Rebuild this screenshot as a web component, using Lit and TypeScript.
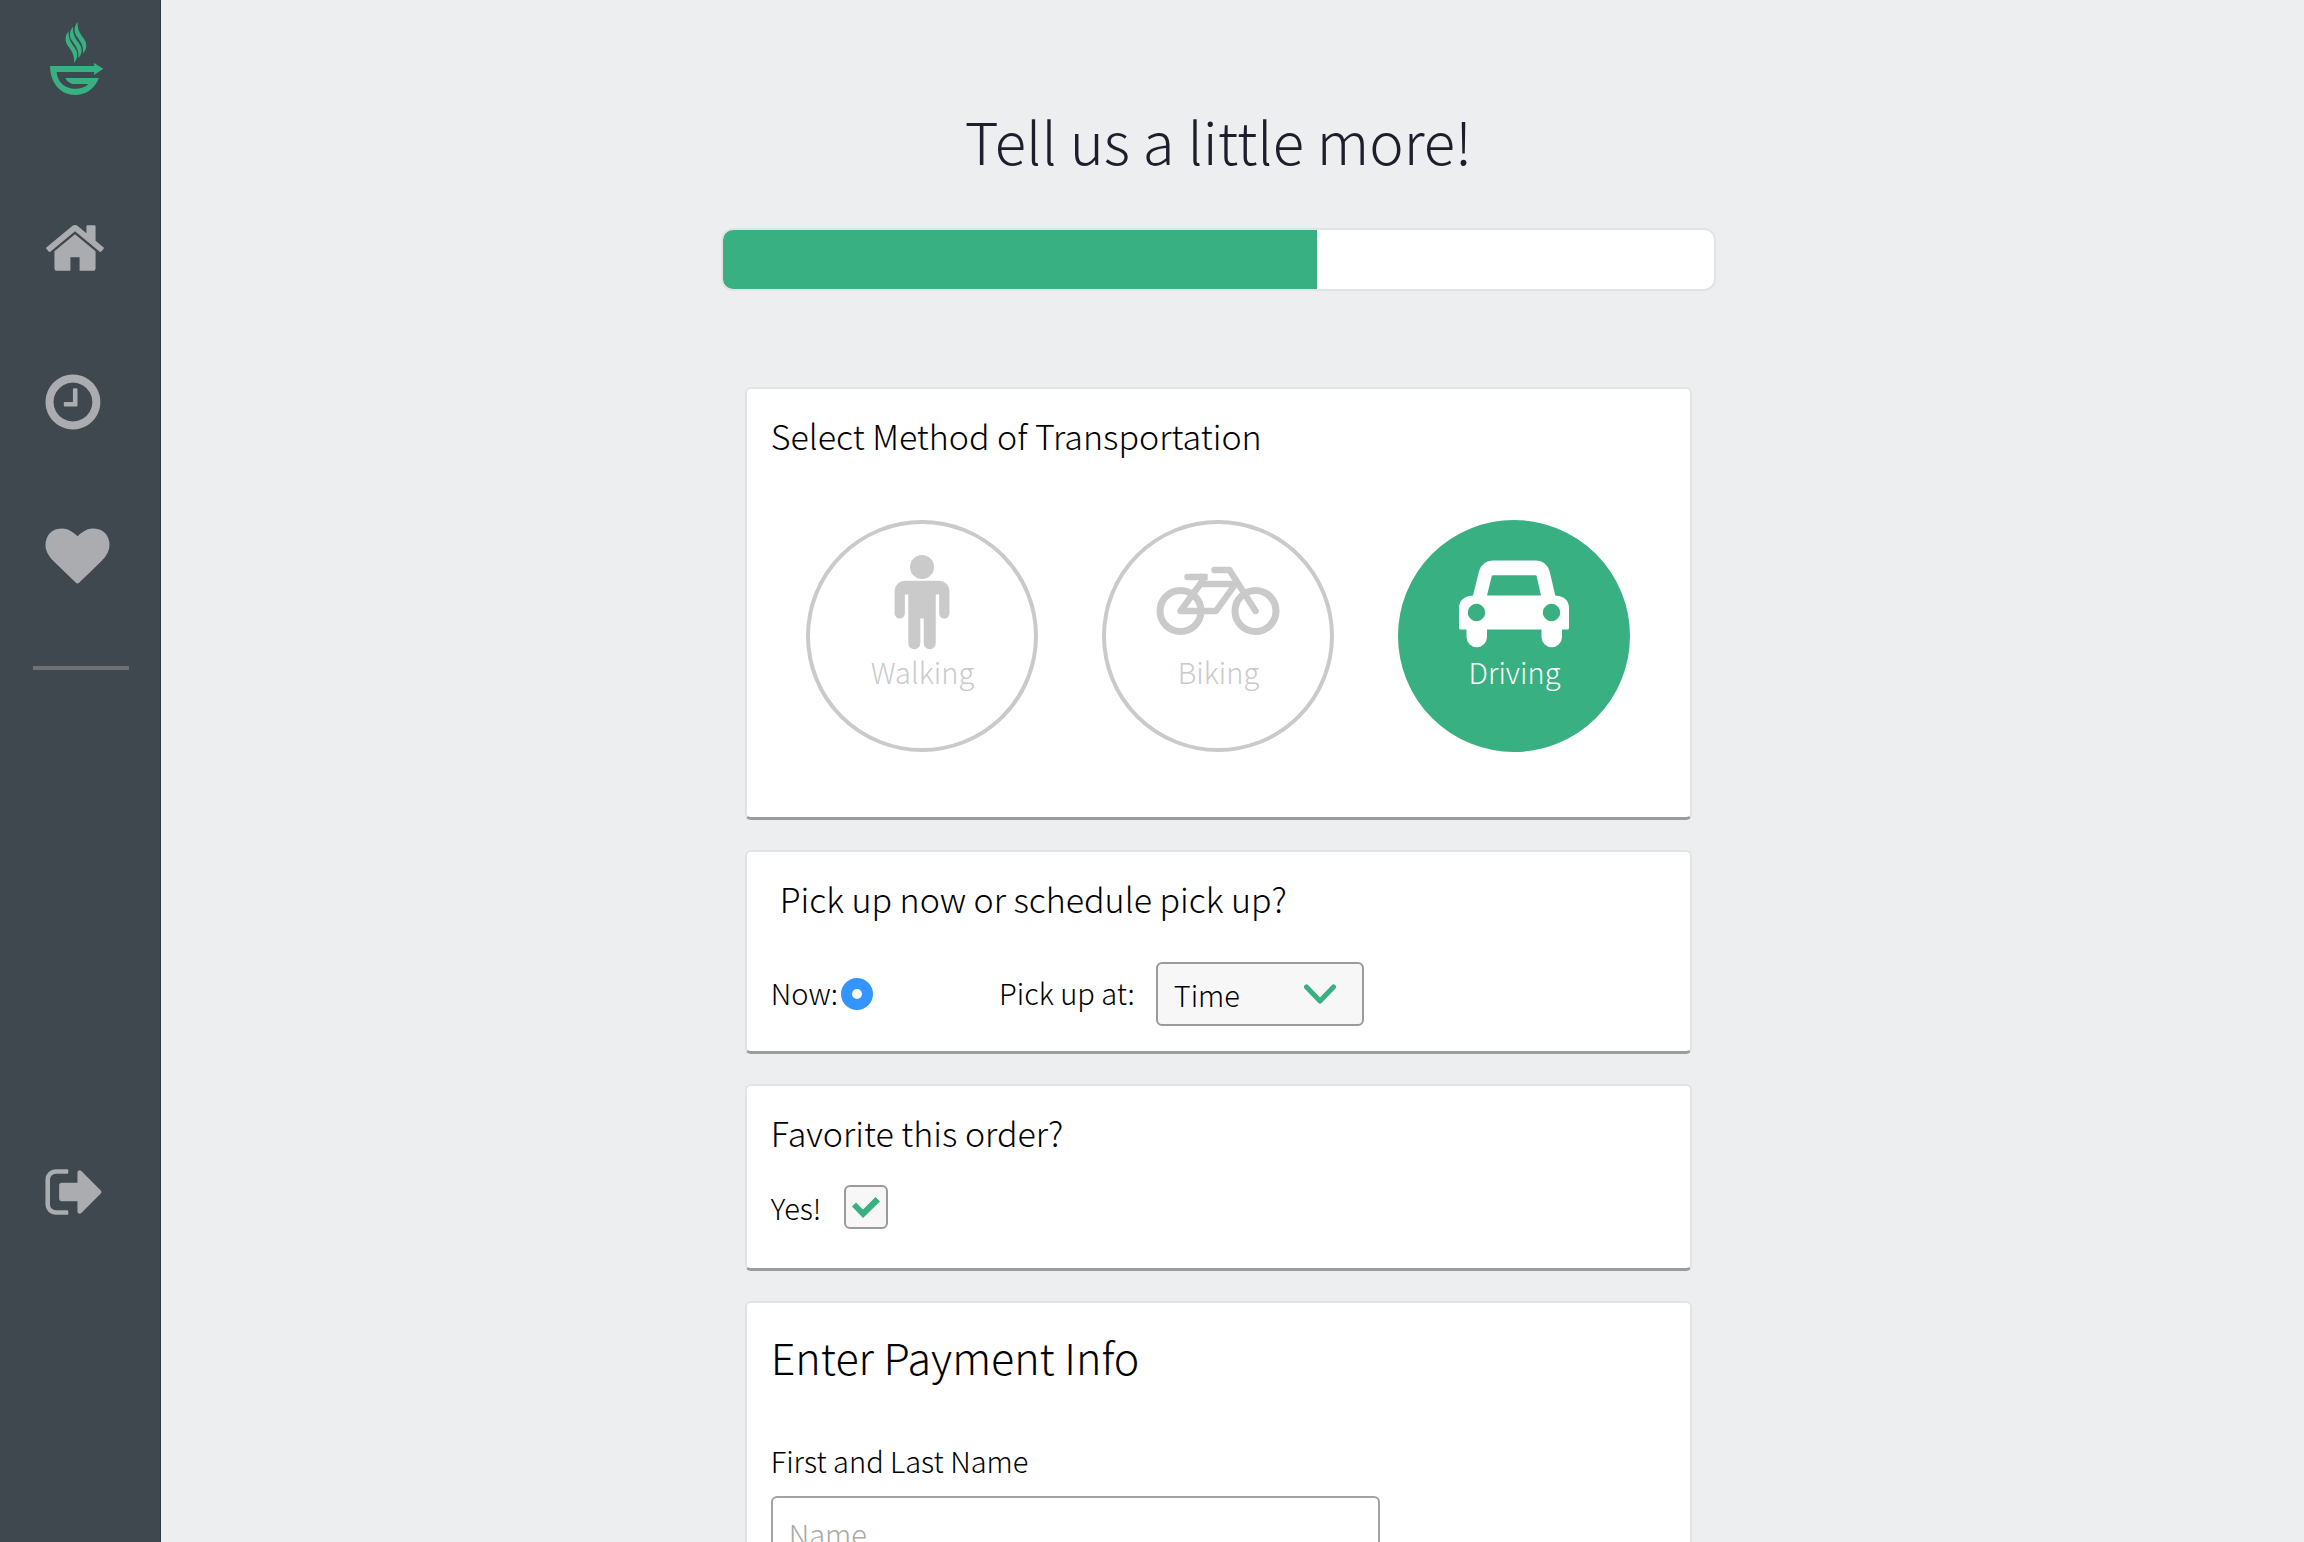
import { LitElement, html, css, svg } from "lit";
import { customElement, state } from "lit/decorators.js";
import { classMap } from "lit/directives/class-map.js";

const flame = "M233 66C221 80 222 96 229 107C239 122 252 134 249 161C259 150 261 138 257 126C252 111 231 100 233 66Z";
const logo = svg`
  <path d="M150 198H283L281 188L310 206L281 226L283 216H170C172 248 196 266 225 266C242 266 256 262 265 252H217Q203 248 196 234H297C284 266 258 285 225 285C184 285 151 252 150 198Z"/>
  <path d=${flame}/>
  <path transform="translate(-14 14)" d=${flame}/>
  <path transform="translate(-27 28)" d=${flame}/>`;

const home = svg`<path d="M1472 992v480q0 26-19 45t-45 19h-384v-384h-256v384h-384q-26 0-45-19t-19-45v-480q0-1 .5-3t.5-3l575-474 575 474q1 2 1 6zm223-69l-62 74q-8 9-21 11h-3q-13 0-21-7l-692-577-692 577q-12 8-24 7-13-2-21-11l-62-74q-8-10-7-23.5t11-21.5l719-599q32-26 76-26t76 26l244 204v-195q0-14 9-23t23-9h192q14 0 23 9t9 23v408l219 182q10 8 11 21.5t-7 23.5z"/>`;
const clock = svg`<path d="M1024 544v448q0 14-9 23t-23 9h-320q-14 0-23-9t-9-23v-64q0-14 9-23t23-9h224v-352q0-14 9-23t23-9h64q14 0 23 9t9 23zm416 352q0-148-73-273t-198-198-273-73-273 73-198 198-73 273 73 273 198 198 273 73 273-73 198-198 73-273zm224 0q0 209-103 385.5t-279.5 279.5-385.5 103-385.5-103-279.5-279.5-103-385.5 103-385.5 279.5-279.5 385.5-103 385.5 103 279.5 279.5 103 385.5z"/>`;
const heart = svg`<path d="M896 1664q-26 0-44-18l-624-602q-10-8-27.5-26t-55.5-65.5-68-97.5-53.5-121-23.5-138q0-220 127-344t351-124q62 0 126.5 21.5t120 58 95.5 68.5 76 68q36-36 76-68t95.5-68.5 120-58 126.5-21.5q224 0 351 124t127 344q0 221-229 450l-623 600q-18 18-44 18z"/>`;
const signOut = svg`<path d="M704 1440q0 4 1 20t.5 26.5-3 23.5-10 19.5-20.5 6.5h-320q-119 0-203.5-84.5t-84.5-203.5v-704q0-119 84.5-203.5t203.5-84.5h320q13 0 22.5 9.5t9.5 22.5q0 4 1 20t.5 26.5-3 23.5-10 19.5-20.5 6.5h-320q-66 0-113 47t-47 113v704q0 66 47 113t113 47h312l11.5 1 11.5 3 8 5.5 7 9 2 13.5zm928-544q0 26-19 45l-544 544q-19 19-45 19t-45-19-19-45v-288h-448q-26 0-45-19t-19-45v-384q0-26 19-45t45-19h448v-288q0-26 19-45t45-19 45 19l544 544q19 19 19 45z"/>`;

const walking = svg`<path transform="translate(7 -1.6) scale(.0536)" d="M1408 832v416q0 40-28 68t-68 28-68-28-28-68v-352h-64v912q0 46-33 79t-79 33-79-33-33-79v-464h-64v464q0 46-33 79t-79 33-79-33-33-79v-912h-64v352q0 40-28 68t-68 28-68-28-28-68v-416q0-80 56-136t136-56h640q80 0 136 56t56 136zm-288-448q0 93-65.5 158.5t-158.5 65.5-158.5-65.5-65.5-158.5 65.5-158.5 158.5-65.5 158.5 65.5 65.5 158.5z"/>`;
const biking = svg`<g transform="translate(-6.5 15)" fill="none" stroke="currentColor" stroke-width="6.4" stroke-linejoin="round" stroke-linecap="round">
  <circle cx="24" cy="48" r="20.5" stroke-width="7"/>
  <circle cx="99" cy="48" r="20.5" stroke-width="7"/>
  <path d="M58 7H73L99 48"/>
  <path d="M45 21H79L59.500 48H24L46 18"/>
  <path d="M31 14H47" />
  <path d="M45 14H48" stroke-linecap="square" stroke-linejoin="miter"/>
</g>`;
const driving = svg`<path transform="translate(0 12.5)" fill-rule="evenodd" d="M14 35L20 10.700Q24 0 33.500 0H77Q87 0 90.600 10.700L96.300 35Q110 36 110 48V67.500Q110 69 108.500 69H103V76.500A10.250 10.250 0 0 1 82.500 76.500V69H28V76.500A10.250 10.250 0 0 1 7.500 76.500V69H1.500Q0 69 0 67.500V48Q0 36 14 35ZM28 35H82L77.700 15.700Q77.500 14.700 76.500 14.700H34Q33 14.700 32.700 15.700ZM17.500 43.300a8.700 8.700 0 1 0 .01 0ZM92.500 43.300a8.700 8.700 0 1 0 .01 0Z"/>`;

const navItems = [
  { label: "Home", icon: home, viewBox: "56 0 1792 1792" },
  { label: "Recent orders", icon: clock, viewBox: "114 0 1792 1792" },
  { label: "Favorites", icon: heart, viewBox: "-14 0 1792 1792" },
];

const methods = [
  { id: "walking", label: "Walking", icon: walking },
  { id: "biking", label: "Biking", icon: biking },
  { id: "driving", label: "Driving", icon: driving },
];

@customElement("app-root")
export class AppRoot extends LitElement {
  @state() private method = "driving";
  private progress = 60;

  static styles = css`
    :host {
      display: flex;
      height: 100vh;
      overflow: hidden;
      background: #edeef0;
      color: #000;
      font-family: "Source Sans Pro", "Noto Sans CJK SC", "Noto Sans", sans-serif;
      font-weight: 300;
      font-size: 29px;
      line-height: 44px;
    }
    * { box-sizing: border-box; }
    svg { display: block; fill: currentColor; }

    .sidebar {
      flex: none;
      display: flex;
      flex-direction: column;
      width: 161px;
      padding: 21px 32px 0 45px;
      background: #3f474f;
      border-right: 1px solid #2f3947;
      color: #abacb0;
    }
    .logo { color: #38b082; margin-bottom: 119px; }
    .logo svg { width: 64px; height: 76px; }
    .nav { display: flex; flex-direction: column; gap: 90px; }
    .nav a, .signout { color: inherit; }
    .nav svg, .signout svg { width: 64px; height: 64px; overflow: visible; }
    .rule {
      width: 96px;
      height: 4px;
      margin: 78px 0 0 -12px;
      border: 0;
      background: #6f7074;
    }
    .signout { margin-top: 490px; }

    .main {
      flex: 1;
      display: flex;
      flex-direction: column;
      align-items: center;
      min-width: 0;
      padding: 96px 28px 0 0;
    }
    .main > * { flex: none; }
    .title {
      margin: 0 0 44px;
      color: #1d1e2c;
      font-size: 58px;
      font-weight: 300;
      line-height: 88px;
    }
    .progress {
      width: 47%;
      height: 63px;
      margin-bottom: 96px;
      overflow: hidden;
      background: #fff;
      border: 2px solid #e2e3e5;
      border-radius: 12px;
    }
    .bar { height: 100%; background: #38b082; }

    .form {
      display: flex;
      flex-direction: column;
      gap: 30px;
      width: 44.8%;
    }
    .card {
      padding: 24px;
      background: #fff;
      border: 2px solid #e2e3e4;
      border-bottom: 3px solid #9b9c9e;
      border-radius: 6px;
    }
    h2 {
      margin: 0;
      font-size: 34px;
      font-weight: 300;
      line-height: 46px;
    }
    .indent { padding-left: 9px; }

    .methods {
      display: flex;
      justify-content: center;
      gap: 64px;
      padding: 61px 0 41px;
    }
    .method {
      display: flex;
      flex-direction: column;
      align-items: center;
      width: 232px;
      height: 232px;
      padding: 24px 0 0;
      background: #fff;
      border: 4px solid #cacaca;
      border-radius: 50%;
      color: #cacaca;
      font: inherit;
    }
    .method.selected { background: #38b082; border-color: #38b082; color: #fff; }
    .method svg { width: 110px; height: 101px; overflow: visible; }

    .pickup { display: flex; align-items: center; padding: 40px 0 1px; }
    .pickup label { padding-bottom: 4px; }
    .radio {
      appearance: none;
      width: 32px;
      height: 32px;
      margin: 0 126px 0 3px;
      border: 11px solid #3395ff;
      border-radius: 50%;
      background: #fff;
    }
    .selectbox { display: grid; align-items: center; margin-left: 21px; }
    .selectbox > * { grid-area: 1 / 1; }
    .selectbox svg { justify-self: end; margin-right: 28px; pointer-events: none; color: #38b082; }
    select {
      appearance: none;
      width: 208px;
      height: 64px;
      padding: 0 16px;
      border: 2px solid #999a9b;
      border-radius: 6px;
      background: #f7f7f7;
      color: inherit;
      font: inherit;
    }

    .favorite { display: flex; align-items: center; gap: 23px; padding: 29px 0 15px; }
    .checkbox { display: grid; place-items: center; }
    .checkbox > * { grid-area: 1 / 1; }
    .checkbox input {
      appearance: none;
      width: 44px;
      height: 44px;
      margin: 0;
      border: 2px solid #999a9b;
      border-radius: 6px;
      background: #f7f7f7;
    }
    .checkbox svg { pointer-events: none; color: #38b082; }
    .checkbox input:not(:checked) + svg { visibility: hidden; }

    .payment-title { font-size: 43px; line-height: 58px; margin-bottom: 53px; }
    .name-label { display: block; margin-bottom: 14px; }
    .name {
      display: block;
      width: 68%;
      height: 74px;
      padding: 0 16px;
      border: 2px solid #a2a2a3;
      border-radius: 6px;
      background: #fff;
      color: inherit;
      font: inherit;
    }
    .name::placeholder { color: #a9a9a9; opacity: 1; }
  `;

  render() {
    return html`
      <aside class="sidebar">
        <div class="logo"><svg viewBox="135 63 192 228" aria-hidden="true">${logo}</svg></div>
        <nav class="nav">
          ${navItems.map((item) => html`
            <a href="#" aria-label=${item.label}><svg viewBox=${item.viewBox}>${item.icon}</svg></a>`)}
        </nav>
        <hr class="rule">
        <a class="signout" href="#" aria-label="Sign out"><svg viewBox="52 0 1792 1792">${signOut}</svg></a>
      </aside>
      <main class="main">
        <h1 class="title">Tell us a little more!</h1>
        <div class="progress" role="progressbar" aria-valuenow=${this.progress} aria-valuemin="0" aria-valuemax="100">
          <div class="bar" style="width:${this.progress}%"></div>
        </div>
        <form class="form">
          <section class="card">
            <h2>Select Method of Transportation</h2>
            <div class="methods">
              ${methods.map((m) => html`
                <button type="button"
                  class=${classMap({ method: true, selected: m.id === this.method })}
                  aria-pressed=${m.id === this.method}
                  @click=${() => (this.method = m.id)}>
                  <svg viewBox="0 0 110 101" aria-hidden="true">${m.icon}</svg>
                  <span>${m.label}</span>
                </button>`)}
            </div>
          </section>
          <section class="card">
            <h2 class="indent">Pick up now or schedule pick up?</h2>
            <div class="pickup">
              <label for="now">Now:</label>
              <input class="radio" id="now" type="radio" name="pickup" checked>
              <label for="time">Pick up at:</label>
              <div class="selectbox">
                <select id="time"><option>Time</option></select>
                <svg width="32" height="20" viewBox="0 0 32 20"><path d="M2.500 3L16 17L29.500 3" fill="none" stroke="currentColor" stroke-width="5" stroke-linecap="round" stroke-linejoin="round"/></svg>
              </div>
            </div>
          </section>
          <section class="card">
            <h2>Favorite this order?</h2>
            <div class="favorite">
              <label for="favorite">Yes!</label>
              <span class="checkbox">
                <input id="favorite" type="checkbox" checked>
                <svg width="28" height="21" viewBox="0 0 28 21"><path d="M0 9.500L4 5.500L11 12.500L23.500 0L28 4.500L11 21Z"/></svg>
              </span>
            </div>
          </section>
          <section class="card">
            <h2 class="payment-title">Enter Payment Info</h2>
            <label class="name-label" for="name">First and Last Name</label>
            <input class="name" id="name" type="text" placeholder="Name">
          </section>
        </form>
      </main>
    `;
  }
}
